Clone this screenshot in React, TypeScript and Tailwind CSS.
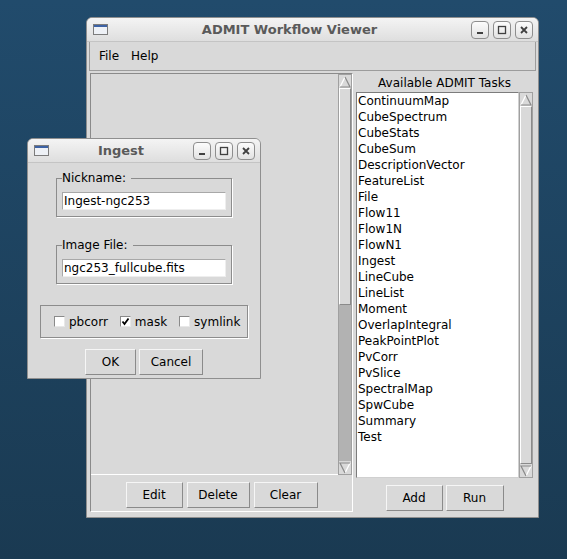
import React from "react";

const tasks = [
    "ContinuumMap", "CubeSpectrum", "CubeStats", "CubeSum", "DescriptionVector",
    "FeatureList", "File", "Flow11", "Flow1N", "FlowN1", "Ingest", "LineCube",
    "LineList", "Moment", "OverlapIntegral", "PeakPointPlot", "PvCorr", "PvSlice",
    "SpectralMap", "SpwCube", "Summary", "Test",
];

function TitleIcon() {
    return (
        <svg width="15" height="11" viewBox="0 0 15 11">
            <rect x="0.5" y="0.5" width="14" height="10" fill="#eef1f6" stroke="#7c7c7c" />
            <rect x="1" y="1" width="13" height="2" fill="#3d62a4" />
        </svg>
    );
}

function WinButton({ kind }: { kind: "min" | "max" | "close" }) {
    return (
        <div className="w-[18px] h-[18px] rounded-[4px] border border-[#8e8e8e] bg-gradient-to-b from-[#fcfcfc] to-[#e2e2e2] flex items-center justify-center">
            <svg width="10" height="10" viewBox="0 0 10 10">
                {kind === "min" && <rect x="2" y="7" width="6" height="2" fill="#404040" />}
                {kind === "max" && <rect x="1.5" y="1.5" width="7" height="7" fill="none" stroke="#404040" strokeWidth="1.3" />}
                {kind === "close" && <path d="M2 2L8 8M8 2L2 8" stroke="#404040" strokeWidth="1.8" />}
            </svg>
        </div>
    );
}

function TitleBar({ title }: { title: string }) {
    return (
        <div className="h-[24px] flex items-center pl-[6px] pr-[5px] rounded-t-[5px] bg-gradient-to-b from-[#f4f4f4] to-[#dedede] border-b border-[#c4c4c4]">
            <TitleIcon />
            <div className="flex-1 text-center text-[13px] font-bold text-[#5a5a5a]">{title}</div>
            <div className="flex gap-[4px]">
                <WinButton kind="min" />
                <WinButton kind="max" />
                <WinButton kind="close" />
            </div>
        </div>
    );
}

function TkButton({ label, className }: { label: string; className: string }) {
    return (
        <button className={`h-[26px] bg-[#d9d9d9] border border-t-[#f6f6f6] border-l-[#f6f6f6] border-r-[#8a8a8a] border-b-[#8a8a8a] text-[12px] text-black ${className}`}>
            {label}
        </button>
    );
}

function Arrow({ down }: { down?: boolean }) {
    return (
        <div className="h-[13px] flex items-center justify-center bg-[#d9d9d9]">
            <svg width="12" height="12" viewBox="0 0 12 12" className={down ? "rotate-180" : ""}>
                <polygon points="6,1 11,11 1,11" fill="#d9d9d9" />
                <path d="M1 11L6 1" stroke="#ffffff" strokeWidth="1.2" />
                <path d="M6 1L11 11L1 11" stroke="#8a8a8a" fill="none" strokeWidth="1.2" />
            </svg>
        </div>
    );
}

function Scrollbar({ full }: { full?: boolean }) {
    return (
        <div className="w-[14px] flex flex-col border border-[#a0a0a0] bg-[#b2b2b2]">
            <Arrow />
            <div className="flex-1 flex flex-col">
                <div className={`${full ? "flex-1" : "h-[217px]"} bg-[#d9d9d9] border border-t-white border-l-white border-r-[#8a8a8a] border-b-[#8a8a8a]`} />
            </div>
            <Arrow down />
        </div>
    );
}

function Entry({ value }: { value: string }) {
    return (
        <div className="w-[164px] h-[18px] bg-white border border-t-[#a8a8a8] border-l-[#a8a8a8] border-r-[#eeeeee] border-b-[#eeeeee] pl-[1px] text-[12px] leading-[16px] text-black">
            {value}
        </div>
    );
}

function Group({ label, value, className }: { label: string; value: string; className: string }) {
    return (
        <fieldset className={`w-[176px] border border-[#8c8c8c] shadow-[1px_1px_0_#ffffff] px-[5px] pb-[6px] ${className}`}>
            <legend className="pr-[5px] text-[12px] leading-[14px] text-black">{label}</legend>
            <div className="pt-[7px]">
                <Entry value={value} />
            </div>
        </fieldset>
    );
}

function Check({ label, checked }: { label: string; checked?: boolean }) {
    return (
        <div className="flex items-center gap-[4px]">
            <div className="w-[11px] h-[11px] bg-white border border-t-[#8a8a8a] border-l-[#8a8a8a] border-r-[#e8e8e8] border-b-[#e8e8e8] flex items-center justify-center">
                {checked && (
                    <svg width="9" height="9" viewBox="0 0 9 9">
                        <path d="M1.5 4.5L3.5 7L7.5 1.5" stroke="#000" strokeWidth="1.8" fill="none" />
                    </svg>
                )}
            </div>
            <span className="text-[12px] text-black">{label}</span>
        </div>
    );
}

export default function App() {
    return (
        <div className="relative w-[567px] h-[559px] overflow-hidden bg-gradient-to-b from-[#214b6c] to-[#1a3a52] font-['DejaVu_Sans',sans-serif]">
            {/* main window */}
            <div className="absolute left-[86px] top-[17px] w-[453px] h-[501px] flex flex-col rounded-t-[6px] border border-[#8f8f8f] bg-[#d9d9d9]">
                <TitleBar title="ADMIT Workflow Viewer" />
                <div className="flex-1 flex flex-col px-[2px] pb-[5px]">
                    <div className="h-[29px] flex items-center gap-[12px] pl-[9px] border-x border-b border-[#9c9c9c] text-[12px] text-black">
                        <span>File</span>
                        <span>Help</span>
                    </div>
                    <div className="mt-[2px] flex-1 flex pl-[1px]">
                        <div className="w-[263px] flex flex-col border border-t-[#8a8a8a] border-l-[#8a8a8a] border-r-white border-b-white">
                            <div className="h-[401px] flex">
                                <div className="flex-1 border-b border-white" />
                                <Scrollbar />
                            </div>
                            <div className="flex-1 flex justify-center gap-[4px] pt-[7px]">
                                <TkButton label="Edit" className="w-[57px]" />
                                <TkButton label="Delete" className="w-[63px]" />
                                <TkButton label="Clear" className="w-[64px]" />
                            </div>
                        </div>
                        <div className="w-[181px] flex flex-col pl-[3px] pr-[1px]">
                            <div className="h-[19px] flex items-center justify-center text-[12px] text-black">Available ADMIT Tasks</div>
                            <div className="h-[386px] flex">
                                <div className="flex-1 bg-white border border-t-[#7c7c7c] border-l-[#7c7c7c] border-r-[#d0d0d0] border-b-[#d0d0d0] pl-[1px] text-[12px] leading-[16px] text-black">
                                    {tasks.map((t) => (
                                        <div key={t}>{t}</div>
                                    ))}
                                </div>
                                <Scrollbar full />
                            </div>
                            <div className="flex-1 flex justify-center gap-[3px] pt-[7px]">
                                <TkButton label="Add" className="w-[57px]" />
                                <TkButton label="Run" className="w-[58px]" />
                            </div>
                        </div>
                    </div>
                </div>
            </div>

            {/* Ingest dialog */}
            <div className="absolute left-[27px] top-[138px] w-[234px] h-[241px] flex flex-col rounded-t-[6px] border border-[#8f8f8f] bg-[#d9d9d9]">
                <TitleBar title="Ingest" />
                <div className="flex-1 flex flex-col items-center">
                    <Group label="Nickname:" value="Ingest-ngc253" className="mt-[8px]" />
                    <Group label="Image File:" value="ngc253_fullcube.fits" className="mt-[21px]" />
                    <div className="mt-[21px] w-[208px] h-[33px] flex items-center gap-[12px] pl-[13px] border border-[#8c8c8c] shadow-[1px_1px_0_#ffffff]">
                        <Check label="pbcorr" />
                        <Check label="mask" checked />
                        <Check label="symlink" />
                    </div>
                    <div className="mt-[11px] flex gap-[3px]">
                        <TkButton label="OK" className="w-[51px]" />
                        <TkButton label="Cancel" className="w-[64px]" />
                    </div>
                </div>
            </div>
        </div>
    );
}
